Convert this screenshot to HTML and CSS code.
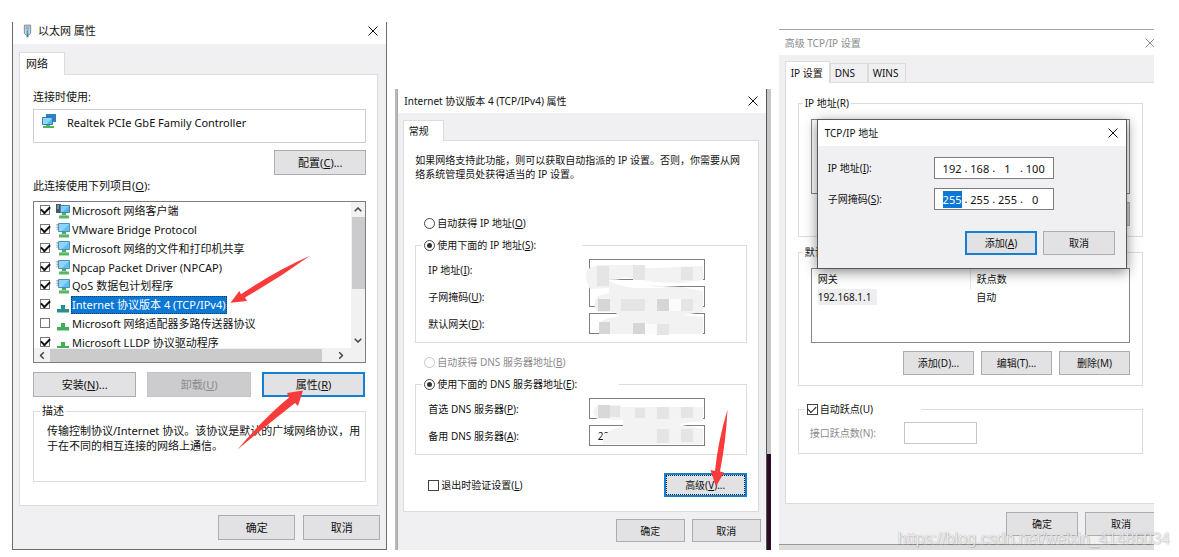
FILE: index.html
```html
<!DOCTYPE html>
<html lang="zh-CN">
<head>
<meta charset="utf-8">
<title>TCP/IP 设置</title>
<link rel="stylesheet" href="styles.css">
</head>
<body>
<svg class="defs" aria-hidden="true">
  <symbol id="close" viewBox="0 0 10 10"><path d="M.5.5l9 9M9.5.5l-9 9" fill="none" stroke="currentColor"/></symbol>
  <symbol id="host" viewBox="0 0 14 15">
    <path d="M1 1v6M1 2h2M1 5h2" stroke="#8b969c" stroke-dasharray="1.5 1" fill="none"/>
    <path d="M2.500 .5h11v8h-11z" fill="#62bdf0" stroke="#4b93b8"/>
    <path d="M3 1h10L6 8H3z" fill="#8fd4fa"/>
    <path d="M6 9h4v3H6z" fill="#4fae62"/><path d="M3 11.500h10v3H3z" fill="#56b765"/><path d="M5 11h6v1H5z" fill="#8dd197"/>
  </symbol>
  <symbol id="client" viewBox="0 0 14 15">
    <path d="M0 0h5v9H0z" fill="#4a5760"/><path d="M1 2h2M1 4h2" stroke="#b8c2c8"/>
    <path d="M4.500 1.500h9v7h-9z" fill="#50b5ee" stroke="#4087ac"/>
    <path d="M5 2h8l-6 6H5z" fill="#82cdf6"/>
    <path d="M6 9h4v3H6z" fill="#4fae62"/><path d="M3 11.500h10v3H3z" fill="#56b765"/><path d="M5 11h6v1H5z" fill="#8dd197"/>
  </symbol>
  <symbol id="proto" viewBox="0 0 14 15"><path d="M5 7h4v4h4v3.500H1V11h4z" fill="currentColor"/></symbol>
  <symbol id="up" viewBox="0 0 8 5"><path d="M.7 4.300L4 1l3.300 3.300" fill="none" stroke="#444" stroke-width="1.500"/></symbol>
</svg>

<main class="page">
  <section class="window eth" aria-label="以太网 属性">
    <header class="title">
      <svg class="plug" viewBox="0 0 10 14" aria-hidden="true"><path d="M1.500.5h7v9l-2 2h-3l-2-2z" fill="#c9d7e0" stroke="#70818d"/><path d="M3 2.500h4M3 4.500h4" stroke="#768c9b"/><path d="M4 6h2v5H4z" fill="#39a3df"/><path d="M4 11h2v3H4z" fill="#5a7280"/></svg>
      <h1>以太网 属性</h1>
      <button class="close" aria-label="关闭"><svg><use href="#close"/></svg></button>
    </header>
    <nav class="tabs"><button class="tab active">网络</button></nav>
    <div class="panel">
      <p class="label">连接时使用:</p>
      <div class="adapter">
        <svg viewBox="0 0 15 14" aria-hidden="true"><path d="M5 0h10v8H5z" fill="#2f7fc4"/><path d="M1.500 3.500h10v7h-10z" fill="#58b8ee" stroke="#2a82bd"/><path d="M2 4h9l-5 6H2z" fill="#93d4f7"/><path d="M5 11h4v1h4v2H2v-2h3z" fill="#53b356"/></svg>
        <span>Realtek PCIe GbE Family Controller</span>
      </div>
      <div class="config"><button class="btn">配置(<u>C</u>)...</button></div>
      <p class="label">此连接使用下列项目(<u>O</u>):</p>
      <div class="listbox">
        <div class="view">
          <ul class="items">
            <li><label><input type="checkbox" checked><svg><use href="#client"/></svg><span>Microsoft 网络客户端</span></label></li>
            <li><label><input type="checkbox" checked><svg><use href="#host"/></svg><span>VMware Bridge Protocol</span></label></li>
            <li><label><input type="checkbox" checked><svg><use href="#host"/></svg><span>Microsoft 网络的文件和打印机共享</span></label></li>
            <li><label><input type="checkbox" checked><svg><use href="#host"/></svg><span>Npcap Packet Driver (NPCAP)</span></label></li>
            <li><label><input type="checkbox" checked><svg><use href="#host"/></svg><span>QoS 数据包计划程序</span></label></li>
            <li class="selected"><label><input type="checkbox" checked><svg><use href="#proto"/></svg><span>Internet 协议版本 4 (TCP/IPv4)</span></label></li>
            <li><label><input type="checkbox"><svg><use href="#proto"/></svg><span>Microsoft 网络适配器多路传送器协议</span></label></li>
            <li><label><input type="checkbox" checked><svg><use href="#proto"/></svg><span>Microsoft LLDP 协议驱动程序</span></label></li>
          </ul>
        </div>
        <div class="vbar"><svg><use href="#up"/></svg><i></i><svg class="down"><use href="#up"/></svg></div>
        <div class="hbar"><svg class="left"><use href="#up"/></svg><i></i><svg class="right"><use href="#up"/></svg></div>
      </div>
      <div class="actions">
        <button class="btn">安装(<u>N</u>)...</button>
        <button class="btn" disabled>卸载(<u>U</u>)</button>
        <button class="btn primary">属性(<u>R</u>)</button>
      </div>
      <fieldset class="desc"><legend>描述</legend>
        <p>传输控制协议/Internet 协议。该协议是默认的广域网络协议，用<br>于在不同的相互连接的网络上通信。</p>
      </fieldset>
    </div>
    <footer class="foot"><button class="btn">确定</button><button class="btn">取消</button></footer>
    <svg class="arrow arrow-item" viewBox="230 255 81 49" aria-hidden="true"><path d="M230.500 302.700L239.300 291l1.700 3.300Q275 271 310 255.700 279 278 245 297.500l2 3.500z"/></svg>
    <svg class="arrow arrow-props" viewBox="237 390 67 60" aria-hidden="true"><path d="M303 390.500L287 393l2 4.500Q263 419 237.500 449.500 267 425 295 403l3 3z"/></svg>
  </section>

  <div class="ipv4-shot">
    <section class="window ipv4" aria-label="Internet 协议版本 4 (TCP/IPv4) 属性">
      <header class="title"><h1>Internet 协议版本 4 (TCP/IPv4) 属性</h1><button class="close" aria-label="关闭"><svg><use href="#close"/></svg></button></header>
      <nav class="tabs"><button class="tab active">常规</button></nav>
      <div class="panel">
        <p class="intro">如果网络支持此功能，则可以获取自动指派的 IP 设置。否则，你需要从网<br>络系统管理员处获得适当的 IP 设置。</p>
        <label class="choice"><input type="radio" name="ip"><span>自动获得 IP 地址(<u>O</u>)</span></label>
        <fieldset>
          <legend><label class="choice"><input type="radio" name="ip" checked><span>使用下面的 IP 地址(<u>S</u>):</span></label></legend>
          <div class="row"><label for="ip">IP 地址(<u>I</u>):</label><input id="ip" type="text"></div>
          <div class="row"><label for="mask">子网掩码(<u>U</u>):</label><input id="mask" type="text"></div>
          <div class="row"><label for="gate">默认网关(<u>D</u>):</label><input id="gate" type="text"></div>
          <svg class="smudge" viewBox="0 0 122 78" aria-hidden="true">
            <path d="M10 1Q22-3 38 0L60 0V3H70L118 1V15L96 18 70 17 40 12 24 15 28 18 60 20 96 22 118 26V47L98 50 118 52V69H25Q14 68 14 58 20 52 35 52L30 47H13Q6 40 13 31L24 28V23L5 24Q-2 12 3 4z" fill="#f2f2f2"/>
            <path d="M23 15Q30 13 40 16L64 18V21L84 23 50 23Q32 21 23 15z" fill="#fff"/>
            <g fill="#e5e5e6"><path d="M12 1h12v20H12zM48 0h12v15H48zM96 2h12v13H96zM36 34h24v12H36zM96 34h12v12H96zM72 59h12v11H72z"/></g>
            <g fill="#d6d6d8"><path d="M13 34h12v12H13zM72 34h12v12H72zM14 57h11v12H14zM48 58h12v11H48z"/></g>
            <path d="M84 34h12v12H84zM60 59h12v10H60z" fill="#fbfbfb"/>
          </svg>
        </fieldset>
        <label class="choice muted"><input type="radio" name="autodns" disabled><span>自动获得 DNS 服务器地址(<u>B</u>)</span></label>
        <fieldset>
          <legend class="wide"><label class="choice"><input type="radio" name="dns" checked><span>使用下面的 DNS 服务器地址(<u>E</u>):</span></label></legend>
          <div class="row"><label for="dns1">首选 DNS 服务器(<u>P</u>):</label><input id="dns1" type="text"></div>
          <div class="row"><label for="dns2">备用 DNS 服务器(<u>A</u>):</label><input id="dns2" type="text" value="22"></div>
          <svg class="smudge" viewBox="0 0 122 44" aria-hidden="true">
            <path d="M12 1H36V3L118 3V17L92 20 118 25V40H36L18 40 18 34 24 27 38 22V16L12 15Q5 8 12 1z" fill="#f3f3f3"/>
            <g fill="#e5e5e6"><path d="M25 2h10v11H25zM50 4h10v10H50zM72 3h12v12H72zM96 3h12v11H96zM72 25h12v14H72zM96 25h12v13H96z"/></g>
            <path d="M13 1h12v13H13z" fill="#d8d8da"/>
          </svg>
        </fieldset>
        <div class="bottom">
          <label class="choice"><input type="checkbox"><span>退出时验证设置(<u>L</u>)</span></label>
          <button class="btn primary focus">高级(<u>V</u>)...</button>
        </div>
      </div>
      <footer class="foot"><button class="btn">确定</button><button class="btn">取消</button></footer>
      <svg class="arrow arrow-adv" viewBox="710 409 18 78" aria-hidden="true"><path d="M727.500 409.500Q718 441 715 471l-4.500-1 5.500 16.500 8-14-4-1Q726 441 727.500 409.500z"/></svg>
    </section>
  </div>

  <div class="adv-shot">
    <section class="window adv" aria-label="高级 TCP/IP 设置">
      <header class="title"><h1>高级 TCP/IP 设置</h1><button class="close" aria-label="关闭"><svg><use href="#close"/></svg></button></header>
      <nav class="tabs"><button class="tab active">IP 设置</button><button class="tab">DNS</button><button class="tab">WINS</button></nav>
      <div class="panel">
        <fieldset class="group"><legend>IP 地址(R)</legend>
          <div class="grid-box"></div>
          <div class="trio"><button class="btn dim" aria-label="删除"></button></div>
        </fieldset>
        <fieldset class="group"><legend>默认网关(F):</legend>
          <div class="grid-box">
            <table>
              <thead><tr><th>网关</th><th>跃点数</th></tr></thead>
              <tbody><tr><td><span>192.168.1.1</span></td><td>自动</td></tr></tbody>
            </table>
          </div>
          <div class="trio"><button class="btn">添加(D)...</button><button class="btn">编辑(T)...</button><button class="btn">删除(M)</button></div>
        </fieldset>
        <fieldset class="metric"><legend><label class="choice"><input type="checkbox" checked><span>自动跃点(U)</span></label></legend>
          <div class="row muted"><label for="metric">接口跃点数(N):</label><input id="metric" type="text" disabled></div>
        </fieldset>
      </div>
      <footer class="foot"><button class="btn">确定</button><button class="btn">取消</button></footer>
    </section>
    <section class="modal" role="dialog" aria-label="TCP/IP 地址">
      <header class="title"><h1>TCP/IP 地址</h1><button class="close" aria-label="关闭"><svg><use href="#close"/></svg></button></header>
      <div class="modal-body">
        <div class="row"><label for="a1">IP 地址(<u>I</u>):</label><div class="octets"><input id="a1" value="192">.<input aria-label="2" value="168">.<input aria-label="3" value="1">.<input aria-label="4" value="100"></div></div>
        <div class="row"><label for="m1">子网掩码(<u>S</u>):</label><div class="octets"><input id="m1" class="marked" value="255">.<input aria-label="2" value="255">.<input aria-label="3" value="255">.<input aria-label="4" value="0"></div></div>
        <div class="modal-foot"><button class="btn primary">添加(<u>A</u>)</button><button class="btn">取消</button></div>
      </div>
    </section>
  </div>
  <p class="watermark">https://blog.csdn.net/weixin_41486034</p>
</main>
</body>
</html>
```
FILE: styles.css
```css
* { box-sizing: border-box; }
body { margin: 0; background: #fff; color: #111; font: 11px/14px "Noto Sans", "Noto Sans CJK SC", sans-serif; }
h1, p, ul, fieldset { margin: 0; padding: 0; }
h1 { font-size: inherit; font-weight: 400; flex: 1; white-space: nowrap; }
button, input { font: inherit; color: inherit; }
u { text-underline-offset: 1px; }
.defs { position: absolute; width: 0; height: 0; }

.page { position: relative; display: grid; grid-template-columns: repeat(3, minmax(0, 1fr)); column-gap: 8px; align-items: end; padding: 22px 25px 8px 12px; }
.window { position: relative; background: #f0eff1; }
.title { display: flex; align-items: center; background: #fff; }
.close { display: flex; border: 0; padding: 0; background: none; }
.close svg { width: 10px; height: 10px; }
.tabs { display: flex; align-items: flex-end; }
.tab { position: relative; border: 1px solid #dcdcde; border-bottom: 0; background: #f0eff1; padding: 0; white-space: nowrap; }
.tab.active { background: #fff; margin-bottom: -1px; z-index: 1; }
.panel { background: #fff; border: 1px solid #dcdcde; }
.btn { height: 24px; padding: 0; border: 1px solid #adadb0; background: #e2e1e3; white-space: nowrap; }
.btn.primary { border: 2px solid #1580d2; }
.btn:disabled { background: #cccbcd; border-color: #c4c3c5; color: #8b8b8d; }
.foot { display: flex; justify-content: flex-end; gap: 8px; }
fieldset { border: 1px solid #dcdcde; min-width: 0; }
input[type="text"] { border: 1px solid #7d7d80; background: #fff; padding: 0 8px; border-radius: 0; min-width: 0; }
input[type="checkbox"], input[type="radio"] { appearance: none; flex: none; margin: 0; width: 11px; height: 11px; border: 1px solid #444; background: #fff; display: grid; place-items: center; }
input[type="radio"] { border-radius: 50%; }
input[type="radio"]:checked::before { content: ""; width: 5px; height: 5px; border-radius: 50%; background: #333; }
input[type="radio"]:disabled { border-color: #c4c4c4; }
input[type="checkbox"]:checked::before { content: ""; width: 7px; height: 4px; border: solid #111; border-width: 0 0 1px 1px; transform: translateY(-1px) rotate(-45deg); }
.choice { display: flex; align-items: center; gap: 2px; white-space: nowrap; }
.muted { color: #8b8b8d; }
.row { display: flex; align-items: center; white-space: nowrap; }
.arrow { position: absolute; fill: #f93b3b; }

/* Ethernet properties */
.eth { border: 1px solid #6b6b6e; border-top: 0; padding-bottom: 9px; }
.eth .title { height: 22px; padding: 0 8px 4px 10px; }
.eth .plug { width: 9px; height: 14px; margin-right: 6px; }
.eth .tabs { padding: 8px 6px 0; }
.eth .tab { width: 46px; height: 23px; padding-right: 10px; }
.eth .panel { margin: 0 8px 0 6px; padding: 15px 11px 23px 13px; }
.adapter { display: flex; height: 34px; margin-top: 5px; padding: 4px 7px; border: 1px solid #cfcfd1; }
.adapter svg { width: 15px; height: 14px; margin-right: 11px; }
.adapter span { line-height: 18px; }
.config { display: flex; justify-content: flex-end; margin: 7px 0 4px; }
.config .btn { width: 92px; }
.eth .btn { height: 25px; }
.listbox { display: grid; grid-template: 146px 14px / minmax(0, 1fr) 14px; margin-top: 8px; border: 1px solid #7d7d80; }
.view { overflow: hidden; }
.items { display: grid; grid-auto-rows: 1fr; height: 150px; padding-left: 6px; list-style: none; }
.items label { display: flex; align-items: center; height: 100%; white-space: nowrap; }
.items input { width: 10px; height: 10px; margin-bottom: 2px; border-color: #777; }
.items input:checked::before { border-width: 0 0 2px 2px; }
.items svg { width: 14px; height: 15px; margin: 0 1px 0 6px; color: #43ae55; }
.items span { padding: 0 1px; line-height: 18px; }
.selected span { background: #0a78d4; color: #fff; outline: 1px dotted #0b3e6b; outline-offset: -1px; }
.selected svg { color: #279092; }
.vbar, .hbar { display: flex; align-items: center; background: #f1f1f2; }
.vbar { flex-direction: column; padding: 5px 0; }
.vbar i { width: 13px; height: 72px; margin: 5px 0 auto; background: #cbcbcd; }
.hbar { grid-column: 1 / 3; padding: 0 4px; }
.hbar i { width: 84%; height: 13px; margin: 0 auto 0 4px; background: #cbcbcd; }
.vbar svg, .hbar svg { width: 8px; height: 5px; flex: none; }
.down { transform: rotate(180deg); }
.left { transform: rotate(-90deg); }
.right { transform: rotate(90deg); margin-right: 16px; }
.actions { display: grid; grid-template-columns: repeat(3, 1fr); gap: 11px; margin: 9px 1px 7px 0; }
.desc { height: 78px; padding: 5px 0 0 13px; }
.desc legend { margin-left: -7px; padding: 0 2px; }
.desc p { line-height: 15px; white-space: nowrap; }
.eth .foot { padding: 9px 6px 0; }
.eth .foot .btn { width: 77px; }
.arrow-item { left: 217px; top: 233px; width: 81px; height: 49px; }
.arrow-props { left: 224px; top: 368px; width: 67px; height: 60px; }

/* IPv4 properties */
.ipv4-shot, .adv-shot { font-size: 10px; }
.ipv4-shot { padding: 0 4px 0 2px; background: linear-gradient(90deg, #b9b9bc 2px, transparent 2px), linear-gradient(#c6c6c8 365px, #2c0b24 365px); }
.ipv4 { border-right: 1px solid #555; border-left: 1px solid #aaa; padding-bottom: 8px; }
.ipv4 .title { height: 24px; padding: 0 8px 0 6px; }
.ipv4 .tabs { padding: 7px 5px 0; }
.ipv4 .tab { width: 41px; height: 21px; padding-right: 10px; }
.ipv4 .panel { margin: 0 7px 0 5px; padding: 12px 11px 14px 11px; }
.intro { white-space: nowrap; margin-bottom: 35px; }
.ipv4 .panel > .choice { padding-left: 9px; }
.ipv4 fieldset { position: relative; margin: 8px 0 12px; padding: 7px 41px 8px 12px; }
.ipv4 legend { margin-left: -6px; padding: 0 2px; width: 160px; }
.ipv4 legend.wide { width: 197px; }
.ipv4 .row { height: 21px; margin-bottom: 6px; }
.ipv4 .row:last-of-type { margin-bottom: 0; }
.ipv4 .row label { flex: 1; }
.ipv4 .row input { width: 116px; height: 21px; }
.smudge { position: absolute; right: 39px; top: 13px; width: 122px; }
.bottom { display: flex; justify-content: space-between; padding: 6px 0 0 13px; }
.bottom .btn { width: 83px; height: 24px; }
.focus { outline: 1px dotted #222; outline-offset: -3px; }
.ipv4 .foot { padding: 7px 5px 0; gap: 7px; }
.ipv4 .foot .btn { width: 69px; height: 23px; }
.arrow-adv { right: 38px; top: 320px; width: 18px; height: 78px; }

/* Advanced settings */
.adv-shot { position: relative; overflow: hidden; border-top: 1px solid #a5a5a8; background: #ddd; padding-bottom: 5px; }
.adv { border-bottom: 1px solid #999; padding-bottom: 8px; }
.adv > .title { height: 25px; padding-left: 6px; color: #8b8b8d; }
.adv > .title .close { margin-right: -1px; }
.adv .tabs { padding: 6px 6px 0; }
.adv .tab { width: 38px; height: 19px; padding: 0 0 0 4px; text-align: left; }
.adv .tab.active { width: 45px; height: 22px; padding-left: 5px; }
.adv .panel { margin-left: 6px; border-right: 0; padding: 13px 11px 49px 12px; }
.group { height: 141px; padding: 9px 12px 0; }
.group + .group { margin-top: 8px; }
.group legend { margin-left: -8px; padding: 0 2px; }
.grid-box { height: 75px; border: 1px solid #858588; }
.group table { width: 100%; border-collapse: collapse; table-layout: fixed; }
.group th, .group td { padding: 2px 6px; font-weight: 400; text-align: left; line-height: 16px; }
.group th + th { border-left: 1px solid #e4e4e6; }
.group td { padding-top: 0; }
.group td span { display: inline-block; background: #eeedef; padding-right: 6px; }
.trio { display: flex; justify-content: flex-end; gap: 7px; margin-top: 8px; }
.trio .btn { width: 71px; }
.adv .foot .btn { width: 72px; }
.dim { background: #cfcfd1; }
.metric { margin-top: 16px; padding: 6px 11px 9px; }
.metric legend { width: 116px; margin-left: -5px; padding-left: 2px; }
.metric .row label { width: 94px; }
.metric .row input { width: 73px; height: 22px; border-color: #c6c6c8; }
.adv .foot { padding-top: 8px; margin-right: -3px; gap: 7px; }

.modal { position: absolute; left: 38px; right: 27px; top: 89px; background: #f0eff1; border: 1px solid #58585b; box-shadow: 0 3px 12px #0007; }
.modal .title { height: 26px; padding: 0 8px 0 7px; }
.modal-body { padding: 11px 11px 13px 10px; }
.modal .row { height: 22px; margin-bottom: 9px; }
.modal .row label { width: 106px; }
.octets { display: flex; align-items: center; width: 120px; height: 22px; padding: 0 5px; border: 1px solid #7d7d80; background: #fff; font-size: 11px; }
.octets input { width: 22px; min-width: 0; flex: 1; height: 17px; border: 0; padding: 0; background: none; text-align: center; }
.octets input.marked { background: linear-gradient(#0a78d4, #0a78d4) center / 19px 100% no-repeat; color: #fff; }
.modal-foot { display: flex; justify-content: flex-end; gap: 6px; padding-top: 12px; }
.modal-foot .btn { width: 72px; }
.watermark { position: absolute; right: 9px; bottom: 9px; font: 16px/20px "Liberation Sans", sans-serif; color: #fffc; text-shadow: 0 0 1px #0005, 1px 1px 1px #0002; }
```
